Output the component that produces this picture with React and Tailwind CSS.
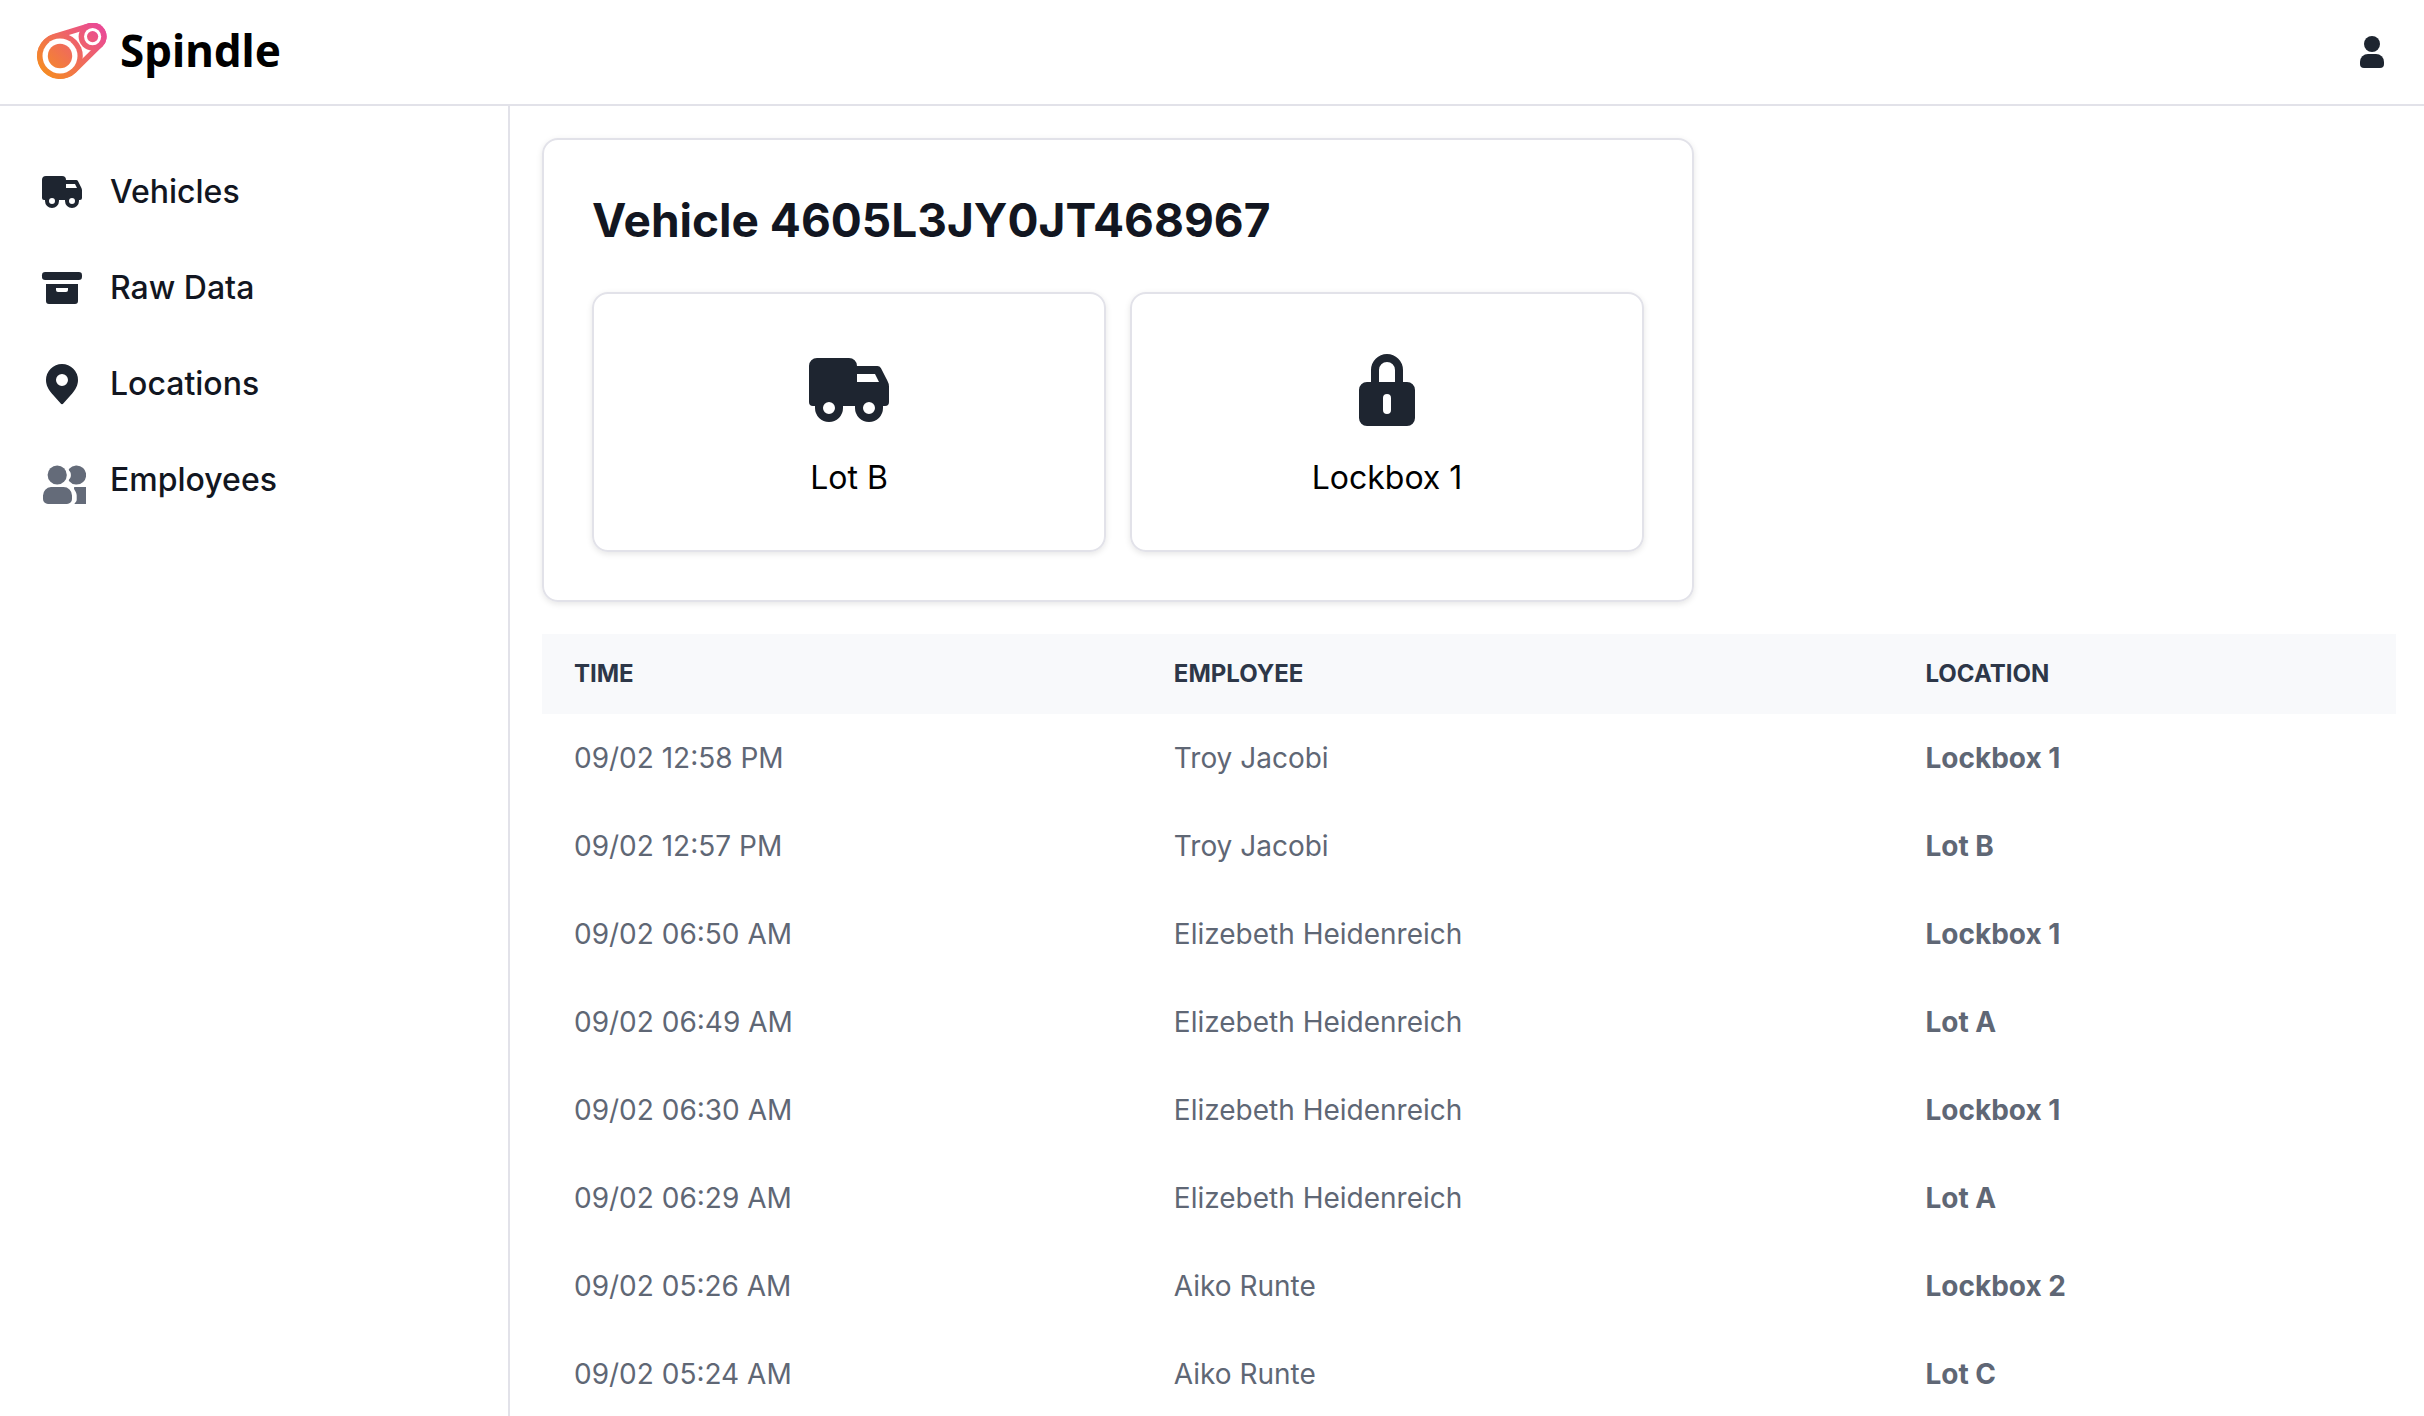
const navItems = [
  { href: "#vehicles", label: "Vehicles", icon: TruckIcon },
  { href: "#raw-data", label: "Raw Data", icon: ArchiveIcon },
  { href: "#locations", label: "Locations", icon: PinIcon },
  { href: "#employees", label: "Employees", icon: UsersIcon },
];

const events = [
  { time: "09/02 12:58 PM", employee: "Troy Jacobi", location: "Lockbox 1" },
  { time: "09/02 12:57 PM", employee: "Troy Jacobi", location: "Lot B" },
  { time: "09/02 06:50 AM", employee: "Elizebeth Heidenreich", location: "Lockbox 1" },
  { time: "09/02 06:49 AM", employee: "Elizebeth Heidenreich", location: "Lot A" },
  { time: "09/02 06:30 AM", employee: "Elizebeth Heidenreich", location: "Lockbox 1" },
  { time: "09/02 06:29 AM", employee: "Elizebeth Heidenreich", location: "Lot A" },
  { time: "09/02 05:26 AM", employee: "Aiko Runte", location: "Lockbox 2" },
  { time: "09/02 05:24 AM", employee: "Aiko Runte", location: "Lot C" },
];

function TruckIcon({ className }) {
  return (
    <svg viewBox="0 0 24 24" fill="currentColor" className={className} aria-hidden="true">
      <path
        fillRule="evenodd"
        d="M4 4h8a2 2 0 0 1 2 2h5.1a1 1 0 0 1 .87.5L21.6 9.7a3 3 0 0 1 .4 1.5V15a1 1 0 0 1-1 1h-.5v.5a3.5 3.5 0 1 1-7 0V16h-3v.5a3.5 3.5 0 1 1-7 0V16H3a1 1 0 0 1-1-1V6a2 2 0 0 1 2-2Zm10 4v2h5.5l-1-2H14ZM7 15a1.5 1.5 0 1 0 0 3 1.5 1.5 0 0 0 0-3Zm10 0a1.5 1.5 0 1 0 0 3 1.5 1.5 0 0 0 0-3Z"
      />
    </svg>
  );
}

function ArchiveIcon({ className }) {
  return (
    <svg viewBox="0 0 24 24" fill="currentColor" className={className} aria-hidden="true">
      <rect x="2" y="4" width="20" height="4" rx="1.6" />
      <path
        fillRule="evenodd"
        d="M4 10h16v8.5a1.5 1.5 0 0 1-1.5 1.5h-13A1.5 1.5 0 0 1 4 18.5Zm5 2v1a1 1 0 0 0 1 1h4a1 1 0 0 0 1-1v-1Z"
      />
    </svg>
  );
}

function PinIcon({ className }) {
  return (
    <svg viewBox="0 0 24 24" fill="currentColor" className={className} aria-hidden="true">
      <path
        fillRule="evenodd"
        d="M12 2a8 8 0 0 1 8 8c0 2.7-1.3 4.9-2.9 6.7l-4.35 4.95a1 1 0 0 1-1.5 0L6.9 16.7C5.3 14.9 4 12.7 4 10a8 8 0 0 1 8-8Zm0 5a3 3 0 1 0 0 6 3 3 0 0 0 0-6Z"
      />
    </svg>
  );
}

function UsersIcon({ className }) {
  return (
    <svg viewBox="0 0 48 48" className={className} aria-hidden="true">
      <g fill="#646b79">
        <circle cx="19.2" cy="19" r="9.6" />
        <path d="M31.2 12.8a9.6 9.6 0 1 1 0 12.4c-.9-1.2-.1-2 .7-2.8 1.3-1.4 1.3-5.4 0-6.8-.8-.8-1.6-1.6-.7-2.8Z" />
        <path d="M13 31h12.5a8.5 8.5 0 0 1 8.5 8.5V43a5 5 0 0 1-5 5H10a5 5 0 0 1-5-5v-3.5A8.5 8.5 0 0 1 13 31Z" />
        <path d="M36.5 31H48v17H36.5c0-1.3 2.2-1.6 2.2-4.5v-4c0-3.8-2.9-5.5-2.7-7.5 0-.6.2-.9.5-1Z" />
      </g>
    </svg>
  );
}

function LockIcon({ className }) {
  return (
    <svg viewBox="0 0 24 24" fill="currentColor" className={className} aria-hidden="true">
      <path
        fillRule="evenodd"
        d="M8 10V7a4 4 0 1 1 8 0v3h1a2 2 0 0 1 2 2v7a2 2 0 0 1-2 2H7a2 2 0 0 1-2-2v-7a2 2 0 0 1 2-2Zm2 0h4V7a2 2 0 1 0-4 0Zm2 3a1 1 0 0 0-1 1v3a1 1 0 1 0 2 0v-3a1 1 0 0 0-1-1Z"
      />
    </svg>
  );
}

function UserIcon({ className }) {
  return (
    <svg viewBox="0 0 24 32" fill="currentColor" className={className} aria-hidden="true">
      <circle cx="12" cy="8" r="8" />
      <path d="M8 18h8a8 8 0 0 1 8 8v2a4 4 0 0 1-4 4H4a4 4 0 0 1-4-4v-2a8 8 0 0 1 8-8Z" />
    </svg>
  );
}

function Logo() {
  return (
    <svg viewBox="36 23 72 58" className="h-[58px] w-[72px]" aria-hidden="true">
      <defs>
        <linearGradient id="belt" gradientUnits="userSpaceOnUse" x1="46" y1="74" x2="96" y2="25">
          <stop offset="0" stopColor="#f58a25" />
          <stop offset="1" stopColor="#ea4b93" />
        </linearGradient>
      </defs>
      <path
        fill="url(#belt)"
        d="M53.3 34 88.5 23.2A14 14 0 0 1 102.4 46.6L76.1 72.4A23 23 0 1 1 53.3 34Z"
      />
      <path fill="#fff" d="M54.9 39.3 90.1 28.5 98.6 42.7 72.3 68.5Z" />
      <circle cx="60" cy="56" r="22.8" fill="url(#belt)" />
      <circle cx="92.6" cy="36.6" r="14" fill="url(#belt)" />
      <circle cx="60" cy="56" r="17.5" fill="#fff" />
      <circle cx="60" cy="56" r="12.2" fill="url(#belt)" />
      <circle cx="92.6" cy="36.6" r="8.6" fill="#fff" />
      <circle cx="92.6" cy="36.6" r="5.6" fill="url(#belt)" />
    </svg>
  );
}

function Header() {
  return (
    <header className="flex h-[106px] shrink-0 items-center justify-between border-b-2 border-[#e2e2e9] pr-10 pl-9">
      <a href="#home" className="flex items-center gap-3">
        <Logo />
        <span className="pb-1 font-['Noto_Sans',sans-serif] text-[44px] leading-[52px] font-bold text-black">
          Spindle
        </span>
      </a>
      <button type="button" aria-label="Account" className="text-[#1e2530]">
        <UserIcon className="h-8 w-6" />
      </button>
    </header>
  );
}

function Sidebar() {
  return (
    <aside className="w-[510px] shrink-0 border-r-2 border-[#e2e2e9] px-[38px] pt-[38px]">
      <nav>
        {navItems.map((item) => {
          const Icon = item.icon;
          return (
            <a
              key={item.href}
              href={item.href}
              className="flex h-24 items-center gap-6 text-[32px] leading-[48px] font-medium text-[#121621]"
            >
              <Icon className="size-12 text-[#1e2530]" />
              <span>{item.label}</span>
            </a>
          );
        })}
      </nav>
    </aside>
  );
}

function LocationCard({ icon: Icon, label }) {
  return (
    <div className="flex flex-1 flex-col items-center gap-4 rounded-2xl border-2 border-[#e2e2e9] p-12 shadow-[0_2px_6px_rgba(0,0,0,0.1)]">
      <Icon className="size-24 text-[#1e2530]" />
      <p className="text-[32px] leading-[48px] text-black">{label}</p>
    </div>
  );
}

export default function App() {
  return (
    <div className="flex h-screen flex-col overflow-hidden bg-white font-[Inter,sans-serif]">
      <Header />
      <div className="flex min-h-0 flex-1">
        <Sidebar />
        <main className="min-w-0 flex-1 overflow-y-auto pt-8 pr-7 pl-8 [scrollbar-width:none]">
          <section className="max-w-6xl rounded-2xl border-2 border-[#e2e2e9] p-12 shadow-[0_2px_6px_rgba(0,0,0,0.1)]">
            <h1 className="mb-10 text-[46px] leading-[64px] font-bold text-[#121621]">
              Vehicle 4605L3JY0JT468967
            </h1>
            <div className="flex gap-6">
              <LocationCard icon={TruckIcon} label="Lot B" />
              <LocationCard icon={LockIcon} label="Lockbox 1" />
            </div>
          </section>
          <table className="mt-8 w-full table-fixed text-left text-[28px] text-[#5f6775]">
            <thead className="bg-[#f8f9fb] text-2xl text-[#2d3748] uppercase">
              <tr className="h-20">
                <th className="w-11/34 px-8 font-bold">Time</th>
                <th className="w-15/37 px-8 font-bold">Employee</th>
                <th className="px-8 font-bold">Location</th>
              </tr>
            </thead>
            <tbody>
              {events.map((event) => (
                <tr key={event.time} className="h-[88px]">
                  <td className="px-8">{event.time}</td>
                  <td className="px-8">{event.employee}</td>
                  <td className="px-8 font-bold">{event.location}</td>
                </tr>
              ))}
            </tbody>
          </table>
        </main>
      </div>
    </div>
  );
}
